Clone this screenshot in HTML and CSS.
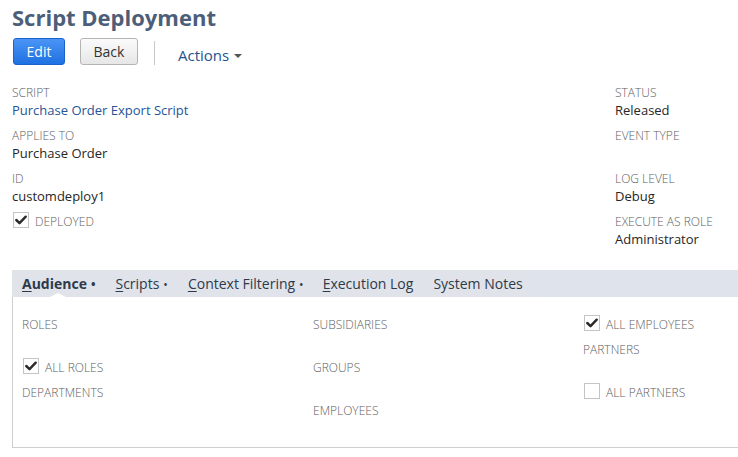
FILE: index.html
```html
<!DOCTYPE html>
<html>
<head>
<meta charset="utf-8">
<link rel="stylesheet" href="styles.css">
</head>
<body>
<div class="page">
  <h1 class="title">Script Deployment</h1>
  <div class="toolbar">
    <button class="btn btn-primary">Edit</button>
    <button class="btn btn-secondary">Back</button>
    <span class="sep"></span>
    <span class="actions">Actions <span class="caret"></span></span>
  </div>

  <div class="fields">
    <div class="col">
      <div class="field"><div class="label">SCRIPT</div><div class="value link">Purchase Order Export Script</div></div>
      <div class="field"><div class="label">APPLIES TO</div><div class="value">Purchase Order</div></div>
      <div class="field"><div class="label">ID</div><div class="value">customdeploy1</div></div>
      <div class="check-field"><span class="cbox checked"><svg viewBox="0 0 16 16" width="14" height="14"><polyline points="2.6,8 6.3,11.6 13.4,4.2" fill="none" stroke="#2b2b2b" stroke-width="2.8" stroke-linecap="round" stroke-linejoin="round"/></svg></span><span class="label">DEPLOYED</span></div>
    </div>
    <div class="col col-right">
      <div class="field"><div class="label">STATUS</div><div class="value">Released</div></div>
      <div class="field"><div class="label">EVENT TYPE</div><div class="value"></div></div>
      <div class="field"><div class="label">LOG LEVEL</div><div class="value">Debug</div></div>
      <div class="field"><div class="label">EXECUTE AS ROLE</div><div class="value">Administrator</div></div>
    </div>
  </div>

  <div class="tabbar">
    <div class="tabs">
      <span class="tab active"><u>A</u>udience<span class="dot">•</span></span>
      <span class="tab"><u>S</u>cripts<span class="dot">•</span></span>
      <span class="tab"><u>C</u>ontext Filtering<span class="dot">•</span></span>
      <span class="tab"><u>E</u>xecution Log</span>
      <span class="tab">System Notes</span>
    </div>
  </div>
  <div class="panel">
    <div class="pcol c1">
      <div class="pfield"><div class="label">ROLES</div></div>
      <div class="check-field pcheck"><span class="cbox checked"><svg viewBox="0 0 16 16" width="14" height="14"><polyline points="2.6,8 6.3,11.6 13.4,4.2" fill="none" stroke="#2b2b2b" stroke-width="2.8" stroke-linecap="round" stroke-linejoin="round"/></svg></span><span class="label">ALL ROLES</span></div>
      <div class="pfield"><div class="label">DEPARTMENTS</div></div>
    </div>
    <div class="pcol c2">
      <div class="pfield"><div class="label">SUBSIDIARIES</div></div>
      <div class="pfield"><div class="label">GROUPS</div></div>
      <div class="pfield"><div class="label">EMPLOYEES</div></div>
    </div>
    <div class="pcol c3">
      <div class="check-field pcheck"><span class="cbox checked"><svg viewBox="0 0 16 16" width="14" height="14"><polyline points="2.6,8 6.3,11.6 13.4,4.2" fill="none" stroke="#2b2b2b" stroke-width="2.8" stroke-linecap="round" stroke-linejoin="round"/></svg></span><span class="label">ALL EMPLOYEES</span></div>
      <div class="pfield"><div class="label">PARTNERS</div></div>
      <div class="check-field pcheck"><span class="cbox"></span><span class="label">ALL PARTNERS</span></div>
    </div>
  </div>
</div>
</body>
</html>
```

FILE: styles.css
```css
* { box-sizing: border-box; }
html, body { margin: 0; padding: 0; background: #fff; }
body {
  font-family: "Open Sans", "Liberation Sans", sans-serif;
  color: #262626;
  width: 738px;
  overflow: hidden;
}
.page { padding: 0 0 0 12px; }

.title {
  margin: 0;
  padding-top: 3px;
  font-size: 22px;
  line-height: 28px;
  font-weight: 700;
  color: #4d5e78;
}

.toolbar {
  display: flex;
  align-items: center;
  margin-top: 6px;
  height: 28px;
}
.btn {
  font-family: "Open Sans", "Liberation Sans", sans-serif;
  font-size: 14px;
  height: 27px;
  border-radius: 3px;
  padding: 0 10px;
  line-height: 25px;
  cursor: pointer;
}
.btn-primary {
  margin-left: 1px;
  width: 52px;
  color: #fff;
  background: linear-gradient(#4a95f5, #1f70e2);
  border: 1px solid #1b62cc;
}
.btn-secondary {
  margin-left: 15px;
  width: 58px;
  color: #333;
  background: linear-gradient(#fbfbfb, #e6e6e6);
  border: 1px solid #b4b4b4;
}
.sep {
  width: 1px;
  height: 24px;
  background: #c8c8c8;
  margin-left: 16px;
  margin-top: 3px;
}
.actions {
  margin-left: 23px;
  margin-top: 8px;
  font-size: 15px;
  color: #24528e;
  display: inline-flex;
  align-items: center;
}
.caret {
  display: inline-block;
  margin-left: 5px;
  width: 0; height: 0;
  border-left: 4px solid transparent;
  border-right: 4px solid transparent;
  border-top: 4px solid #555;
  margin-top: 2px;
}

.fields {
  display: grid;
  grid-template-columns: 1fr 123px;
  margin-top: 19px;
}
.field { height: 43px; }
.label {
  font-size: 12px;
  line-height: 18px;
  color: #5e5e5e;
  font-weight: 300;
  text-transform: uppercase;
}
.value {
  font-size: 13px;
  line-height: 17px;
  color: #262626;
  min-height: 17px;
}
.value.link { color: #255597; }

.check-field {
  display: flex;
  align-items: flex-end;
  height: 25px;
}
.cbox {
  width: 16px;
  height: 16px;
  border: 1px solid #c4c4c4;
  background: #fff;
  display: inline-flex;
  align-items: center;
  justify-content: center;
  margin-right: 6px;
  margin-left: 1px;
  margin-bottom: 3px;
}
.check-field .label { line-height: 18px; }
.col > .check-field { margin-top: -7px; }

.tabbar {
  margin-top: 14px;
  height: 27px;
  background: #dfe4ec;
}
.tabs {
  display: flex;
  height: 27px;
  width: 520px;
  background: #e0e3e9;
  padding-left: 10px;
  align-items: center;
}
.tab {
  font-size: 14px;
  color: #2e3a4b;
  margin-right: 20px;
  line-height: 27px;
  white-space: nowrap;
  position: relative;
}
.tab u { text-decoration: underline; text-underline-offset: 2px; }
.tab .dot { margin-left: 4px; font-size: 12px; }
.tab.active { font-weight: 700; margin-right: 20px; }
.tab:nth-child(3) { margin-right: 19px; }
.tab.active::after {
  content: "";
  position: absolute;
  left: 26px;
  bottom: 0;
  width: 0; height: 0;
  border-left: 10px solid transparent;
  border-right: 10px solid transparent;
  border-bottom: 5px solid #fff;
}

.panel {
  display: flex;
  height: 151px;
  border-left: 1px solid #cfcfcf;
  border-bottom: 1px solid #cfcfcf;
  padding: 19px 0 0 9px;
}
.pcol { display: flex; flex-direction: column; }
.c1 { width: 291px; }
.c2 { width: 270px; }
.c3 { flex: 1; }
.pfield { height: 43px; }
.pcheck { margin-top: -7px; margin-bottom: 7px; }
```
